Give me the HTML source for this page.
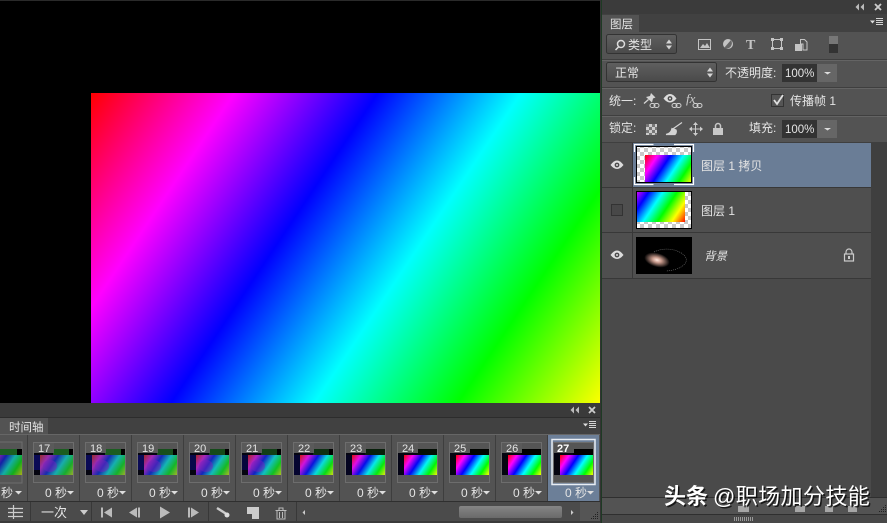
<!DOCTYPE html>
<html><head><meta charset="utf-8"><style>
html,body{margin:0;padding:0;background:#000;width:887px;height:523px;overflow:hidden}
svg{display:block}
text{font-family:"Liberation Sans","Noto Sans CJK SC",sans-serif;font-size:12px;fill:#e4e4e4}
</style></head><body>
<svg width="887" height="523" viewBox="0 0 887 523" xmlns="http://www.w3.org/2000/svg">
<defs>
<linearGradient id="g" gradientUnits="userSpaceOnUse" x1="91" y1="93" x2="587" y2="424">
<stop offset="0" stop-color="#f00"/><stop offset=".2" stop-color="#f0f"/><stop offset=".4" stop-color="#00f"/><stop offset=".6" stop-color="#0ff"/><stop offset=".8" stop-color="#0f0"/><stop offset="1" stop-color="#ff0"/>
</linearGradient>
<linearGradient id="gt" gradientUnits="userSpaceOnUse" x1="0" y1="0" x2="32.200" y2="21.400">
<stop offset="0" stop-color="#f00"/><stop offset=".2" stop-color="#f0f"/><stop offset=".4" stop-color="#00f"/><stop offset=".6" stop-color="#0ff"/><stop offset=".8" stop-color="#0f0"/><stop offset="1" stop-color="#ff0"/>
</linearGradient>
<linearGradient id="gl" gradientUnits="userSpaceOnUse" x1="0" y1="0" x2="44.800" y2="29.800">
<stop offset="0" stop-color="#f00"/><stop offset=".2" stop-color="#f0f"/><stop offset=".4" stop-color="#00f"/><stop offset=".6" stop-color="#0ff"/><stop offset=".8" stop-color="#0f0"/><stop offset="1" stop-color="#ff0"/>
</linearGradient>
<linearGradient id="gl2" gradientUnits="userSpaceOnUse" x1="-2" y1="-1" x2="47.500" y2="32">
<stop offset="0" stop-color="#f0f"/><stop offset=".2" stop-color="#00f"/><stop offset=".4" stop-color="#0ff"/><stop offset=".6" stop-color="#0f0"/><stop offset=".8" stop-color="#ff0"/><stop offset="1" stop-color="#f00"/>
</linearGradient>
<linearGradient id="sc" x1="0" y1="0" x2="0" y2="1"><stop offset="0" stop-color="#858585"/><stop offset="1" stop-color="#6a6a6a"/></linearGradient>
<linearGradient id="bt" x1="0" y1="0" x2="0" y2="1"><stop offset="0" stop-color="#5f5f5f"/><stop offset="1" stop-color="#4a4a4a"/></linearGradient>
<radialGradient id="glow"><stop offset="0" stop-color="#ffe6dc"/><stop offset=".35" stop-color="#c89a8c"/><stop offset="1" stop-color="#000"/></radialGradient>
<pattern id="ck" width="8" height="8" patternUnits="userSpaceOnUse"><rect width="8" height="8" fill="#fff"/><rect width="4" height="4" fill="#c8c8c8"/><rect x="4" y="4" width="4" height="4" fill="#c8c8c8"/></pattern>
<g id="th">
<rect x=".5" y=".5" width="40" height="40" fill="#555" stroke="#6d6d6d"/>
<rect x="1" y="7" width="39" height="26" fill="#050510"/>
<g transform="translate(7,13)"><rect width="33" height="20" fill="url(#gt)"/></g>
</g>
<g id="eye"><path d="M-6.5 0 Q0 -9 6.5 0 Q0 8 -6.5 0 Z" fill="#dcdcdc"/><circle r="2.400" fill="#4a4a4a"/><circle r="1" fill="#dcdcdc"/></g>
<path id="tri" d="M0 0h7l-3.500 3.500Z" fill="#ddd"/>
<g id="dbl"><path d="M0 -3.500v7l-3.500-3.500ZM5 -3.500v7l-3.500-3.500Z" fill="#bbb"/></g>
<g id="x"><path d="M-3-3L3 3M3-3L-3 3" stroke="#ccc" stroke-width="1.800"/></g>
<g id="menu"><path d="M-7-1.500h5l-2.500 3Z" fill="#ddd"/><path d="M-1-3.500h7M-1-1.500h7M-1 .5h7M-1 2.500h7" stroke="#d4d4d4" stroke-width="1"/></g>
<g id="link" fill="none" stroke="#cfcfcf"><rect x="-4" y="-2" width="5" height="4" rx="2"/><rect x="0" y="-2" width="5" height="4" rx="2"/></g>
<g id="ud"><path d="M-3-1h6l-3-4ZM-3 1h6l-3 4Z" fill="#d5d5d5"/></g>
</defs>

<rect width="887" height="523" fill="#000"/>
<rect width="601" height="1" fill="#2a2a2a"/>
<rect x="91" y="93" width="509" height="310" fill="url(#g)"/>

<!-- timeline -->
<rect x="0" y="403" width="601" height="120" fill="#3a3a3a"/>
<rect x="0" y="417" width="600" height="1" fill="#2c2c2c"/>
<rect x="0" y="418" width="600" height="16" fill="#414141"/>
<rect x="0" y="418" width="48" height="17" fill="#535353"/>
<text x="9" y="431" style="font-size:11.500px">时间轴</text>
<use href="#dbl" x="574" y="410"/>
<use href="#x" x="592" y="410"/>
<use href="#menu" x="590" y="425"/>
<rect x="0" y="435" width="600" height="66" fill="#535353"/>
<rect x="0" y="434" width="600" height="1" fill="#666"/>
<rect x="548" y="435" width="51" height="66" fill="#6c7f98"/>
<g fill="#3e3e3e"><rect x="27" y="435" width="1" height="66"/><rect x="79" y="435" width="1" height="66"/><rect x="131" y="435" width="1" height="66"/><rect x="183" y="435" width="1" height="66"/><rect x="235" y="435" width="1" height="66"/><rect x="287" y="435" width="1" height="66"/><rect x="339" y="435" width="1" height="66"/><rect x="391" y="435" width="1" height="66"/><rect x="443" y="435" width="1" height="66"/><rect x="495" y="435" width="1" height="66"/><rect x="547" y="435" width="1" height="66"/></g>

<!-- frame 16 partial -->
<rect x="-19" y="442" width="41" height="41" fill="#555" stroke="#6d6d6d"/>
<rect x="0" y="449" width="22" height="6" fill="#1c5f22"/><rect x="17" y="449" width="5" height="6" fill="#000"/>
<g transform="translate(-12,455)"><rect x="12" width="22" height="20" fill="url(#gt)"/><rect x="12" width="22" height="20" fill="#2a4a3a" opacity=".45"/></g>

<!-- frames -->
<g>
<use href="#th" x="33" y="442"/><use href="#th" x="85" y="442"/><use href="#th" x="137" y="442"/><use href="#th" x="189" y="442"/><use href="#th" x="241" y="442"/><use href="#th" x="293" y="442"/><use href="#th" x="345" y="442"/><use href="#th" x="397" y="442"/><use href="#th" x="449" y="442"/><use href="#th" x="501" y="442"/><use href="#th" x="553" y="442"/>
</g>
<g fill="#1b5d20"><rect x="53" y="449" width="20" height="6"/><rect x="105" y="449" width="20" height="6"/><rect x="157" y="449" width="20" height="6" fill="#174f1c"/><rect x="209" y="449" width="20" height="6" fill="#154a1a"/><rect x="261" y="449" width="20" height="6" fill="#123f17"/><rect x="313" y="449" width="20" height="6" fill="#0e3012"/><rect x="365" y="449" width="20" height="6" fill="#08200b"/><rect x="417" y="449" width="20" height="6" fill="#040f05"/><rect x="469" y="449" width="20" height="6" fill="#010401"/></g>
<g fill="#000"><rect x="69" y="449" width="4" height="6"/><rect x="121" y="449" width="4" height="6"/><rect x="173" y="449" width="4" height="6"/><rect x="225" y="449" width="4" height="6"/><rect x="277" y="449" width="4" height="6"/><rect x="329" y="449" width="4" height="6"/><rect x="521" y="449" width="20" height="6"/><rect x="573" y="449" width="20" height="6"/></g>
<!-- navy left bands on old frames -->
<g fill="#0a0a55"><rect x="34" y="455" width="6" height="15"/><rect x="86" y="455" width="6" height="15"/><rect x="138" y="455" width="6" height="15"/><rect x="190" y="455" width="6" height="15" fill="#08084a"/><rect x="242" y="455" width="6" height="15" fill="#06063c"/><rect x="294" y="455" width="6" height="20" fill="#050530"/><rect x="346" y="455" width="6" height="20" fill="#040420"/><rect x="398" y="455" width="6" height="20" fill="#030315"/></g>
<!-- fading overlays -->
<g fill="#2f5a5a"><rect x="40" y="455" width="33" height="20" opacity=".5"/><rect x="92" y="455" width="33" height="20" opacity=".48"/><rect x="144" y="455" width="33" height="20" opacity=".45"/><rect x="196" y="455" width="33" height="20" opacity=".42"/><rect x="248" y="455" width="33" height="20" opacity=".38"/><rect x="300" y="455" width="33" height="20" opacity=".22"/><rect x="352" y="455" width="33" height="20" opacity=".14"/><rect x="404" y="455" width="33" height="20" opacity=".06"/></g>
<g fill="#7a20c0" opacity=".45"><ellipse cx="50" cy="466" rx="7" ry="6"/><ellipse cx="102" cy="466" rx="7" ry="6"/><ellipse cx="154" cy="466" rx="7" ry="6"/><ellipse cx="206" cy="466" rx="7" ry="6"/><ellipse cx="258" cy="466" rx="7" ry="6"/></g>
<!-- number tabs -->
<g fill="#5a5a5a"><rect x="34" y="443" width="20" height="10"/><rect x="86" y="443" width="20" height="10"/><rect x="138" y="443" width="20" height="10"/><rect x="190" y="443" width="20" height="10"/><rect x="242" y="443" width="20" height="10"/><rect x="294" y="443" width="20" height="10"/><rect x="346" y="443" width="20" height="10"/><rect x="398" y="443" width="20" height="10"/><rect x="450" y="443" width="20" height="10"/><rect x="502" y="443" width="20" height="10"/></g>
<rect x="554" y="443" width="20" height="10" fill="#555"/>
<rect x="552" y="439.500" width="43" height="45" fill="none" stroke="#e8edf3" stroke-width="1.500"/>
<g>
<text x="38" y="452" style="font-size:11px">17</text><text x="90" y="452" style="font-size:11px">18</text><text x="142" y="452" style="font-size:11px">19</text><text x="194" y="452" style="font-size:11px">20</text><text x="246" y="452" style="font-size:11px">21</text><text x="298" y="452" style="font-size:11px">22</text><text x="350" y="452" style="font-size:11px">23</text><text x="402" y="452" style="font-size:11px">24</text><text x="454" y="452" style="font-size:11px">25</text><text x="506" y="452" style="font-size:11px">26</text>
<text x="557" y="452" style="font-size:11px;font-weight:bold;fill:#fff">27</text>
</g>
<!-- time labels -->
<g>
<text x="1" y="497">秒</text>
<text x="45" y="497">0 秒</text><text x="97" y="497">0 秒</text><text x="149" y="497">0 秒</text><text x="201" y="497">0 秒</text><text x="253" y="497">0 秒</text><text x="305" y="497">0 秒</text><text x="357" y="497">0 秒</text><text x="409" y="497">0 秒</text><text x="461" y="497">0 秒</text><text x="513" y="497">0 秒</text><text x="565" y="497">0 秒</text>
</g>
<use href="#tri" x="15" y="491"/><use href="#tri" x="67" y="491"/><use href="#tri" x="119" y="491"/><use href="#tri" x="171" y="491"/><use href="#tri" x="223" y="491"/><use href="#tri" x="275" y="491"/><use href="#tri" x="327" y="491"/><use href="#tri" x="379" y="491"/><use href="#tri" x="431" y="491"/><use href="#tri" x="483" y="491"/><use href="#tri" x="535" y="491"/><use href="#tri" x="587" y="491"/>

<!-- timeline controls -->
<rect x="0" y="501" width="600" height="1" fill="#2f2f2f"/>
<rect x="0" y="502" width="600" height="19" fill="#4b4b4b"/>
<g fill="#383838"><rect x="30" y="502" width="1" height="19"/><rect x="91" y="502" width="1" height="19"/><rect x="208" y="502" width="1" height="19"/><rect x="296" y="502" width="1" height="19"/></g>
<path d="M8 508.500h15M8 512.500h15M8 516.500h15M13.500 505v14" stroke="#ccc" stroke-width="1.200" fill="none"/>
<text x="41" y="517" style="font-size:13px">一次</text>
<path d="M80 510h8l-4 5Z" fill="#ccc"/>
<path d="M101 507.500h2v10h-2ZM112 507.500v10l-8-5Z" fill="#bbb"/>
<path d="M137 507.500v10l-8-5ZM138 507.500h2v10h-2Z" fill="#bbb"/>
<path d="M160 506.500l10 6-10 6Z" fill="#bbb"/>
<path d="M188 507.500h2v10h-2ZM191 507.500l8 5-8 5Z" fill="#bbb"/>
<path d="M217 508l11 7" stroke="#ccc" stroke-width="2.500"/><circle cx="227" cy="515" r="2.500" fill="#ddd"/>
<path d="M247 507h12v12h-7v-5h-5Z" fill="#ccc"/>
<path d="M275.500 510.500h11M277 511v8h8v-8M279.500 512v6M282.500 512v6M279 510v-2h4v2" stroke="#bbb" fill="none"/>
<path d="M305 510v5l-2.500-2.500Z" fill="#ccc"/>
<rect x="459" y="506" width="103" height="12" rx="2" fill="url(#sc)"/>
<path d="M571 510v5l2.500-2.500Z" fill="#ccc"/>
<rect x="580" y="502" width="20" height="19" fill="#555"/>
<g fill="#222"><rect x="597" y="518" width="1" height="1"/><rect x="595" y="518" width="1" height="1"/><rect x="593" y="518" width="1" height="1"/><rect x="591" y="518" width="1" height="1"/><rect x="597" y="516" width="1" height="1"/><rect x="595" y="516" width="1" height="1"/><rect x="593" y="516" width="1" height="1"/><rect x="597" y="514" width="1" height="1"/><rect x="595" y="514" width="1" height="1"/><rect x="597" y="512" width="1" height="1"/></g>

<!-- right panel -->
<rect x="600" y="0" width="287" height="523" fill="#333"/>
<rect x="601" y="0" width="1" height="523" fill="#1e3a24"/>
<rect x="602" y="0" width="285" height="14" fill="#3b3b3b"/>
<use href="#dbl" x="859" y="7"/><use href="#x" x="878" y="7"/>
<rect x="602" y="14" width="285" height="18" fill="#414141"/>
<rect x="602" y="15" width="37" height="17" fill="#535353"/>
<text x="610" y="28" style="font-size:11.500px">图层</text>
<use href="#menu" x="877" y="22"/>
<rect x="602" y="32" width="285" height="111" fill="#535353"/>
<g fill="#3f3f3f"><rect x="602" y="59" width="285" height="1"/><rect x="602" y="87" width="285" height="1"/><rect x="602" y="115" width="285" height="1"/><rect x="602" y="142" width="285" height="1"/></g>
<g fill="#646464"><rect x="602" y="60" width="285" height="1"/><rect x="602" y="88" width="285" height="1"/><rect x="602" y="116" width="285" height="1"/></g>
<!-- filter -->
<rect x="606.500" y="34.500" width="70" height="19" rx="2" fill="url(#bt)" stroke="#333"/>
<circle cx="621" cy="44" r="3.500" fill="none" stroke="#ddd" stroke-width="1.500"/><path d="M618.500 47l-3 3" stroke="#ddd" stroke-width="1.500"/>
<text x="628" y="49">类型</text>
<use href="#ud" x="669" y="44.500"/>
<rect x="698.500" y="39.500" width="12" height="10" fill="#555" stroke="#c4c4c4"/><path d="M700 48l3-4 2 2 2-3 3 5Z" fill="#c4c4c4"/>
<circle cx="728" cy="44" r="5" fill="#c4c4c4"/><path d="M724 48a5.500 5.500 0 0 0 7-8Z" fill="#666"/>
<text x="746" y="49" style="font-family:'Liberation Serif',serif;font-size:14px;font-weight:bold;fill:#c4c4c4">T</text>
<rect x="772.500" y="39.500" width="9" height="9" fill="none" stroke="#c4c4c4"/><g fill="#c4c4c4"><rect x="771" y="38" width="3" height="3"/><rect x="780" y="38" width="3" height="3"/><rect x="771" y="47" width="3" height="3"/><rect x="780" y="47" width="3" height="3"/></g>
<path d="M800.500 39.500h4l2.500 2.500v8h-4v-6h-2.500Z" fill="none" stroke="#c4c4c4"/><rect x="795" y="44" width="7" height="7" fill="#c4c4c4"/>
<rect x="829" y="36" width="9" height="17" fill="#333"/><rect x="829" y="36" width="9" height="8" fill="#777"/>
<!-- blend -->
<rect x="606.500" y="62.500" width="110" height="19" rx="2" fill="url(#bt)" stroke="#333"/>
<text x="615" y="77">正常</text>
<use href="#ud" x="710" y="72.500"/>
<text x="725" y="77">不透明度:</text>
<rect x="782" y="64" width="35" height="18" fill="#333"/>
<rect x="817" y="64" width="20" height="18" fill="#666"/>
<text x="785" y="77" style="font-size:11.500px">100%</text>
<path d="M824 72h7l-3.500 2.500Z" fill="#ddd"/>
<!-- unify -->
<text x="609" y="105">统一:</text>
<path d="M651 93L655.500 97.500L653 98.500L652 102.500L646 97L650 96Z" fill="#d4d4d4"/><path d="M648.500 99.500L644 103.500" stroke="#d4d4d4" stroke-width="1.300"/><use href="#link" x="654" y="105.500"/>
<use href="#eye" x="670" y="98.500"/><use href="#link" x="676" y="105.500"/>
<text x="686" y="103" style="font-family:'Liberation Serif',serif;font-style:italic;font-size:13px;fill:#ccc">fx</text><use href="#link" x="697" y="105.500"/>
<rect x="771.500" y="94.500" width="12" height="12" fill="#555" stroke="#333"/>
<path d="M774 100l3 4 6-9" stroke="#e0e0e0" stroke-width="1.800" fill="none"/>
<text x="790" y="105">传播帧 1</text>
<!-- lock -->
<text x="609" y="132">锁定:</text>
<rect x="646" y="124" width="11" height="11" fill="#ccc"/><g fill="#777"><rect x="646" y="124" width="3" height="3"/><rect x="652" y="124" width="3" height="3"/><rect x="649" y="127" width="3" height="3"/><rect x="655" y="127" width="2" height="3"/><rect x="646" y="130" width="3" height="3"/><rect x="652" y="130" width="3" height="3"/><rect x="649" y="133" width="3" height="2"/><rect x="655" y="133" width="2" height="2"/></g>
<path d="M682 122.500L672 129.500M672 128.500q-1 5-6 6h9q2-2 1-4.500Z" fill="#d4d4d4" stroke="#d4d4d4" stroke-width="1.200"/>
<path d="M695.500 123v12M690 129h12" stroke="#ccc"/><path d="M695.500 122l2.500 3h-5ZM695.500 136l-2.500-3h5ZM689 129l3-2.500v5ZM703 129l-3-2.500v5Z" fill="#ccc"/>
<rect x="713" y="128" width="10" height="7" fill="#c8c8c8"/><path d="M715.500 128v-2a2.500 2.500 0 0 1 5 0v2" fill="none" stroke="#c8c8c8" stroke-width="1.500"/>
<text x="749" y="132">填充:</text>
<rect x="782" y="120" width="35" height="18" fill="#333"/>
<rect x="817" y="120" width="20" height="18" fill="#666"/>
<text x="785" y="133" style="font-size:11.500px">100%</text>
<path d="M824 128h7l-3.500 2.500Z" fill="#ddd"/>

<!-- layers -->
<rect x="602" y="143" width="269" height="354" fill="#4a4a4a"/>
<rect x="871" y="143" width="16" height="354" fill="#3f3f3f"/>
<rect x="602" y="143" width="269" height="44" fill="#4f4f4f"/>
<rect x="633" y="143" width="238" height="44" fill="#6a7d96"/>
<rect x="602" y="188" width="269" height="44" fill="#4f4f4f"/>
<rect x="602" y="233" width="269" height="45" fill="#4f4f4f"/>
<g fill="#383838"><rect x="602" y="187" width="269" height="1"/><rect x="602" y="232" width="269" height="1"/><rect x="602" y="278" width="269" height="1"/><rect x="632" y="143" width="1" height="135"/></g>
<use href="#eye" x="617" y="165"/><use href="#eye" x="617" y="255"/>
<rect x="611.500" y="204.500" width="11" height="11" fill="#484848" stroke="#333"/>
<!-- thumb 1 -->
<rect x="636.500" y="146.500" width="55" height="36" fill="url(#ck)" stroke="#000"/>
<g transform="translate(645,155)"><rect width="46" height="27" fill="url(#gl)"/></g>
<path d="M634.500 152v-7.500h19M674 144.500h19.500v7.500M693.500 177v7.500h-19.500M653.500 184.500h-19v-7.500" fill="none" stroke="#fff" stroke-width="1.200"/>
<text x="701" y="170">图层 1 拷贝</text>
<!-- thumb 2 -->
<rect x="636.500" y="191.500" width="55" height="37" fill="url(#ck)" stroke="#000"/>
<g transform="translate(637,192)"><rect width="48" height="30" fill="url(#gl2)"/></g>
<text x="701" y="215">图层 1</text>
<!-- thumb 3 -->
<rect x="636" y="237" width="56" height="37" fill="#000"/>
<ellipse cx="657" cy="260" rx="13" ry="7" fill="url(#glow)" transform="rotate(15 657 260)"/>
<path d="M654 252c12-6 28-2 32 6 2 6-6 12-20 13" fill="none" stroke="#777" stroke-width=".6" stroke-dasharray="1 1"/>
<text x="704" y="260" style="font-style:italic;font-size:11.500px">背景</text>
<rect x="844.500" y="254" width="9" height="7" fill="none" stroke="#ccc" stroke-width="1.200"/><path d="M846 254v-2a3 3 0 0 1 6 0v2" fill="none" stroke="#ccc" stroke-width="1.200"/><rect x="848" y="256" width="2" height="3" fill="#ccc"/>

<!-- bottom bar -->
<rect x="602" y="497" width="285" height="1" fill="#2f2f2f"/>
<rect x="602" y="498" width="285" height="17" fill="#535353"/>
<rect x="602" y="514" width="285" height="1" fill="#2f2f2f"/>
<rect x="602" y="515" width="285" height="8" fill="#484848"/>
<g fill="#bbb" opacity=".8"><rect x="738" y="506" width="11" height="6"/><rect x="795" y="506" width="10" height="6"/><rect x="825" y="506" width="8" height="6"/><rect x="848" y="506" width="9" height="6"/></g>
<g stroke="#999" stroke-width="1"><path d="M734.500 517v4M736.500 517v4M738.500 517v4M740.500 517v4M742.500 517v4M744.500 517v4M746.500 517v4M748.500 517v4M750.500 517v4M752.500 517v4"/></g>
<g fill="#222"><rect x="885" y="511" width="1" height="1"/><rect x="883" y="511" width="1" height="1"/><rect x="881" y="511" width="1" height="1"/><rect x="879" y="511" width="1" height="1"/><rect x="885" y="509" width="1" height="1"/><rect x="883" y="509" width="1" height="1"/><rect x="881" y="509" width="1" height="1"/><rect x="885" y="507" width="1" height="1"/><rect x="883" y="507" width="1" height="1"/><rect x="885" y="505" width="1" height="1"/></g>

<!-- watermark -->
<text x="664" y="504" style="font-size:22px;font-weight:bold;fill:#000;opacity:.7" dx="1.500" dy="1.500">头条</text>
<text x="664" y="504" style="font-size:22px;font-weight:bold;fill:#fff">头条</text>
<text x="713" y="504" style="font-size:22px;letter-spacing:.4px;fill:#000;opacity:.7" dx="1.500" dy="1.500">@职场加分技能</text>
<text x="713" y="504" style="font-size:22px;letter-spacing:.4px;fill:#fff">@职场加分技能</text>
</svg>
</body></html>
